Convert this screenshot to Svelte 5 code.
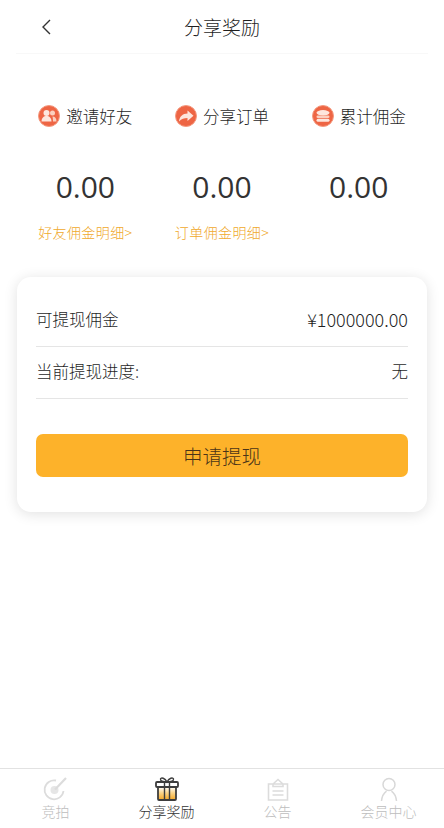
<script>
  const stats = [
    { label: "邀请好友", value: "0.00", link: "好友佣金明细>", icon: "friends" },
    { label: "分享订单", value: "0.00", link: "订单佣金明细>", icon: "share" },
    { label: "累计佣金", value: "0.00", link: "", icon: "coins" },
  ];
</script>

<div class="page">
  <header class="topbar">
    <svg class="back" width="12" height="18" viewBox="0 0 12 18" fill="none" stroke="#333" stroke-width="1.4">
      <path d="M10 2 L3 9 L10 16" />
    </svg>
    <h1>分享奖励</h1>
  </header>

  <section class="stats">
    {#each stats as s}
      <div class="stat">
        <div class="stat-head">
          <svg class="stat-icon" width="22" height="22" viewBox="0 0 22 22">
            <circle cx="11" cy="11" r="10.500" fill="#ee6544" stroke="#f49a80" stroke-width="1" />
            {#if s.icon === "friends"}
              <circle cx="8.500" cy="8" r="3" fill="#fde6dd" />
              <path d="M3.500 16.500c0-3.500 2.200-5.500 5-5.500s5 2 5 5.500z" fill="#fde6dd" />
              <circle cx="14.500" cy="8" r="2.500" fill="#fbd0c0" />
              <path d="M14.500 11.500c2.400 0 4 1.800 4 5h-3.500c0-2-.2-3.500-.5-5z" fill="#fbd0c0" />
            {:else if s.icon === "share"}
              <path d="M12.500 5.500l6 5.300-6 5.200v-3c-3.500 0-6 .8-8.500 3.500.5-4.800 3.500-8 8.500-8z" fill="#fde6dd" />
            {:else}
              <ellipse cx="11" cy="7.800" rx="6.500" ry="2.700" fill="#fde6dd" />
              <rect x="4.500" y="10.500" width="13" height="2.600" rx="1.300" fill="#fbd0c0" />
              <rect x="4.500" y="13.800" width="13" height="3" rx="1.500" fill="#fde6dd" />
            {/if}
          </svg>
          <span>{s.label}</span>
        </div>
        <div class="value">{s.value}</div>
        <div class="link">{s.link}</div>
      </div>
    {/each}
  </section>

  <section class="card">
    <div class="row">
      <span>可提现佣金</span>
      <span class="amount">¥1000000.00</span>
    </div>
    <div class="row">
      <span>当前提现进度:</span>
      <span>无</span>
    </div>
    <button class="withdraw">申请提现</button>
  </section>

  <nav class="tabbar">
    <div class="tab">
      <svg width="30" height="26" viewBox="0 0 30 26" fill="none" stroke="#dcdcdc" stroke-width="1.800">
        <path d="M15 4.500A9.500 9.500 0 1 0 22.500 15" />
        <circle cx="13.500" cy="14" r="4" fill="#e6e6e6" stroke="none" />
        <path d="M14 13.500 L25 2" stroke-width="2.200" />
      </svg>
      <span>竞拍</span>
    </div>
    <div class="tab active">
      <svg width="30" height="26" viewBox="0 0 30 26" fill="none">
        <defs>
          <linearGradient id="giftFill" x1="0" y1="0" x2="0" y2="1">
            <stop offset="0" stop-color="#fff" />
            <stop offset="0.45" stop-color="#fbd58a" />
            <stop offset="1" stop-color="#f5a623" />
          </linearGradient>
        </defs>
        <rect x="6" y="11" width="18" height="13" fill="url(#giftFill)" />
        <g stroke="#3d3d3d" stroke-width="1.800">
          <path d="M6 11v12a1 1 0 0 0 1 1h16a1 1 0 0 0 1-1V11" />
          <rect x="4" y="6" width="22" height="5" rx="1" />
          <path d="M12.500 6v18M17.500 6v18" stroke-width="1.400" />
          <path d="M15 6c-2-4-6-5-6.500-3S11 6 15 6c4 0 7-1 6.500-3S17 2 15 6z" stroke-width="1.400" />
        </g>
      </svg>
      <span>分享奖励</span>
    </div>
    <div class="tab">
      <svg width="30" height="26" viewBox="0 0 30 26" fill="none" stroke="#dcdcdc" stroke-width="1.600">
        <path d="M5.500 8h19v16h-19zM10 8l5-4.500L20 8" />
        <path d="M10 8v2.500h10V8" />
        <path d="M9.500 15h11M9.500 19h11" />
      </svg>
      <span>公告</span>
    </div>
    <div class="tab">
      <svg width="30" height="26" viewBox="0 0 30 26" fill="none" stroke="#d8d8d8" stroke-width="1.500">
        <circle cx="15" cy="8.500" r="6" />
        <path d="M7.500 25c.5-5 2.500-8 5-9.800M22.500 25c-.5-5-2.500-8-5-9.800" />
      </svg>
      <span>会员中心</span>
    </div>
  </nav>
</div>

<style>
  :global(body) {
    margin: 0;
    background: #fff;
  }

  .page {
    height: 828px;
    display: flex;
    flex-direction: column;
    font-family: "Noto Sans CJK SC", "Liberation Sans", sans-serif;
    font-weight: 300;
    color: #1f1f1f;
    overflow: hidden;
  }

  .topbar {
    height: 54px;
    margin: 0 16px;
    border-bottom: 1px solid #f8f8f8;
    box-sizing: border-box;
    position: relative;
    display: flex;
    align-items: center;
    justify-content: center;
  }

  .topbar h1 {
    margin: 0;
    font-size: 19px;
    font-weight: 300;
  }

  .back {
    position: absolute;
    left: 24px;
    top: 18px;
  }

  .stats {
    display: grid;
    grid-template-columns: repeat(3, 1fr);
    padding: 49px 17px 0 17px;
  }

  .stat {
    display: flex;
    flex-direction: column;
    align-items: center;
  }

  .stat-head {
    display: flex;
    align-items: center;
    gap: 6px;
    font-size: 16.500px;
    line-height: 26px;
    white-space: nowrap;
  }

  .stat-icon {
    flex: none;
  }

  .value {
    margin-top: 36px;
    font-family: "Open Sans", "Liberation Sans", sans-serif;
    font-weight: 400;
    font-size: 30px;
    line-height: 44px;
    color: #333;
  }

  .link {
    margin-top: 11px;
    height: 24px;
    font-size: 14px;
    line-height: 24px;
    letter-spacing: 0.4px;
    color: #f0a92c;
    white-space: nowrap;
  }

  .card {
    margin: 33px 17px 0;
    height: 235px;
    padding: 18px 19px 0;
    box-sizing: border-box;
    border-radius: 14px;
    background: #fff;
    box-shadow: 0 2px 14px rgba(0, 0, 0, 0.12);
  }

  .row {
    height: 52px;
    padding-bottom: 4px;
    display: flex;
    align-items: center;
    justify-content: space-between;
    border-bottom: 1px solid #e5e5e5;
    font-size: 16.500px;
    box-sizing: border-box;
  }

  .amount {
    font-size: 18px;
  }

  .withdraw {
    display: block;
    width: 100%;
    height: 43px;
    margin-top: 35px;
    border: none;
    border-radius: 7px;
    background: #fdb22a;
    color: #4a3418;
    font-family: inherit;
    font-weight: 300;
    font-size: 19.500px;
  }

  .tabbar {
    margin-top: auto;
    height: 60px;
    border-top: 1px solid #e2e2e2;
    box-sizing: border-box;
    display: grid;
    grid-template-columns: repeat(4, 1fr);
    background: #fff;
  }

  .tab {
    display: flex;
    flex-direction: column;
    align-items: center;
    padding-top: 7px;
    font-size: 14px;
    line-height: 20px;
    color: #bdbdbd;
  }

  .tab svg {
    margin-bottom: -1px;
  }

  .tab.active {
    color: #333;
  }
</style>
